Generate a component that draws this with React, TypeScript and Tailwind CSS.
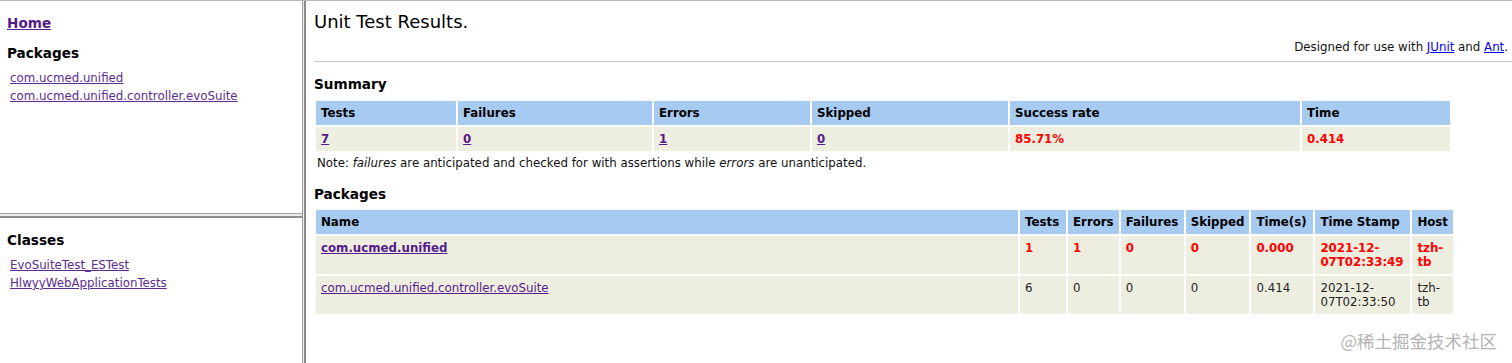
import React from "react";

const summaryCols = [
  { label: "Tests", w: "w-[140px]" },
  { label: "Failures", w: "w-[194px]" },
  { label: "Errors", w: "w-[156px]" },
  { label: "Skipped", w: "w-[196px]" },
  { label: "Success rate", w: "w-[290px]" },
  { label: "Time", w: "w-[148px]" },
];

const pkgCols = [
  { label: "Name", w: "w-[702px]" },
  { label: "Tests", w: "w-[46px]" },
  { label: "Errors", w: "w-[50px]" },
  { label: "Failures", w: "w-[63px]" },
  { label: "Skipped", w: "w-[62px]" },
  { label: "Time(s)", w: "w-[62px]" },
  { label: "Time Stamp", w: "w-[95px]" },
  { label: "Host", w: "w-[40px]" },
];

const packages = [
  {
    name: "com.ucmed.unified",
    tests: "1",
    errors: "1",
    failures: "0",
    skipped: "0",
    time: "0.000",
    stamp: "2021-12-07T02:33:49",
    host: "tzh-tb",
    error: true,
  },
  {
    name: "com.ucmed.unified.controller.evoSuite",
    tests: "6",
    errors: "0",
    failures: "0",
    skipped: "0",
    time: "0.414",
    stamp: "2021-12-07T02:33:50",
    host: "tzh-tb",
    error: false,
  },
];

const th = "bg-[#a6caf0] text-left font-bold px-[5px] py-[5px] align-top";
const td = "bg-[#eeeee0] px-[5px] py-[5px] align-top";

function LinkList({ items }: { items: string[] }) {
  return (
    <div className="flex flex-col pl-[10px]">
      {items.map((it) => (
        <a key={it} href="#" className="text-[11.8px] leading-[18px] text-[#5b2c91] underline whitespace-nowrap">
          {it}
        </a>
      ))}
    </div>
  );
}

export default function App() {
  return (
    <div
      className="relative flex h-[363px] w-[1512px] overflow-hidden bg-white text-black border-t border-[#b8b8b8]"
      style={{ fontFamily: '"DejaVu Sans", Verdana, sans-serif' }}
    >
      {/* left frames */}
      <div className="flex w-[302px] shrink-0 flex-col">
        <div className="h-[212px] pt-[14px]">
          <h2 className="pl-[7px] text-[13.6px] font-bold leading-[16px]">
            <a href="#" className="text-[#551a8b] underline">Home</a>
          </h2>
          <h2 className="mt-[14px] pl-[7px] text-[13.6px] font-bold leading-[16px]">Packages</h2>
          <div className="mt-[8px]">
            <LinkList items={["com.ucmed.unified", "com.ucmed.unified.controller.evoSuite"]} />
          </div>
        </div>
        <div className="h-[5px] border-t border-b-2 border-t-[#a0a0a0] border-b-[#8c8c8c] bg-[#ececec]" />
        <div className="flex-1 pt-[14px]">
          <h2 className="pl-[7px] text-[13.6px] font-bold leading-[16px]">Classes</h2>
          <div className="mt-[8px]">
            <LinkList items={["EvoSuiteTest_ESTest", "HlwyyWebApplicationTests"]} />
          </div>
        </div>
      </div>
      <div className="w-[4px] shrink-0 border-l border-r-2 border-l-[#a0a0a0] border-r-[#8c8c8c] bg-[#ececec]" />

      {/* main frame */}
      <div className="flex-1 pl-[8px] pt-[10px] text-[11.8px]">
        <h1 className="text-[18px] leading-[21px]">Unit Test Results.</h1>
        <div className="mt-[8px] pr-[4px] text-right leading-[14px] text-[#111]">
          Designed for use with{" "}
          <a href="#" className="text-[#0000ee] underline">JUnit</a> and{" "}
          <a href="#" className="text-[#0000ee] underline">Ant</a>.
        </div>
        <hr className="mt-[7px] border-0 border-t border-[#c4c4c4]" />

        <h2 className="mt-[14px] text-[13.6px] font-bold leading-[16px]">Summary</h2>
        <table className="mt-[7px] table-fixed border-separate border-spacing-[2px] leading-[14px]">
          <colgroup>
            {summaryCols.map((c) => (
              <col key={c.label} className={c.w} />
            ))}
          </colgroup>
          <thead>
            <tr>
              {summaryCols.map((c) => (
                <th key={c.label} className={th}>{c.label}</th>
              ))}
            </tr>
          </thead>
          <tbody>
            <tr>
              <td className={td}><a href="#" className="font-bold text-[#551a8b] underline">7</a></td>
              <td className={td}><a href="#" className="font-bold text-[#551a8b] underline">0</a></td>
              <td className={td}><a href="#" className="font-bold text-[#551a8b] underline">1</a></td>
              <td className={td}><a href="#" className="font-bold text-[#551a8b] underline">0</a></td>
              <td className={`${td} font-bold text-[#ff0000]`}>85.71%</td>
              <td className={`${td} font-bold text-[#ff0000]`}>0.414</td>
            </tr>
          </tbody>
        </table>
        <p className="mt-[3px] pl-[3px] leading-[14px] text-[#111]">
          Note: <i>failures</i> are anticipated and checked for with assertions while <i>errors</i> are unanticipated.
        </p>

        <h2 className="mt-[16px] text-[13.6px] font-bold leading-[16px]">Packages</h2>
        <table className="mt-[6px] table-fixed border-separate border-spacing-[2px] leading-[14px]">
          <colgroup>
            {pkgCols.map((c) => (
              <col key={c.label} className={c.w} />
            ))}
          </colgroup>
          <thead>
            <tr>
              {pkgCols.map((c) => (
                <th key={c.label} className={th}>{c.label}</th>
              ))}
            </tr>
          </thead>
          <tbody>
            {packages.map((p) => {
              const cell = p.error ? `${td} font-bold text-[#ff0000]` : `${td} text-[#222]`;
              return (
                <tr key={p.name} className="h-[37px]">
                  <td className={td}>
                    <a href="#" className={`text-[#551a8b] underline ${p.error ? "font-bold" : ""}`}>{p.name}</a>
                  </td>
                  <td className={cell}>{p.tests}</td>
                  <td className={cell}>{p.errors}</td>
                  <td className={cell}>{p.failures}</td>
                  <td className={cell}>{p.skipped}</td>
                  <td className={cell}>{p.time}</td>
                  <td className={cell}>{p.stamp}</td>
                  <td className={cell}>{p.host}</td>
                </tr>
              );
            })}
          </tbody>
        </table>
      </div>

      <div
        className="absolute bottom-[11px] right-[15px] text-[17.5px] leading-[22px] text-[#b4b4b4]"
        style={{ fontFamily: '"Noto Sans CJK SC", "DejaVu Sans", sans-serif' }}
      >
        @稀土掘金技术社区
      </div>
    </div>
  );
}
